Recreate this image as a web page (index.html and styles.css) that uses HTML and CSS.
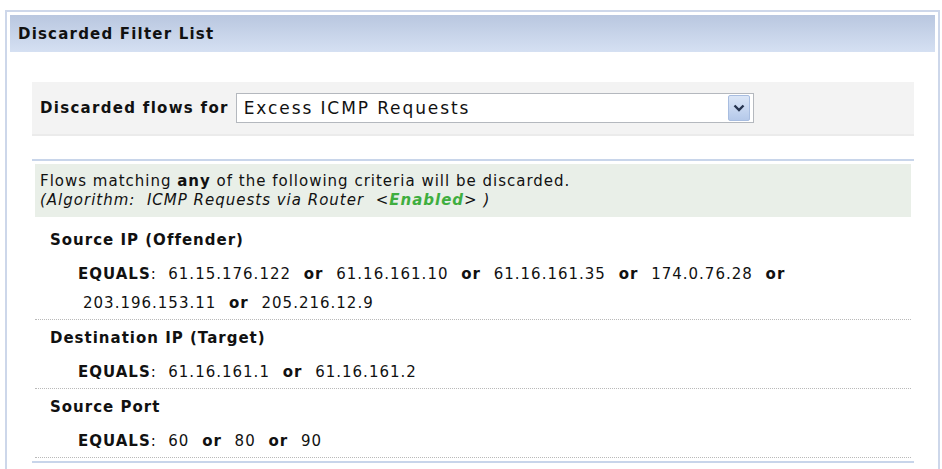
FILE: index.html
```html
<!DOCTYPE html>
<html lang="en">
<head>
    <meta charset="UTF-8">
    <title>Discarded Filter List</title>
    <link rel="stylesheet" href="styles.css">
</head>
<body>
    <div class="panel">
        <div class="panel-header">Discarded Filter List</div>

        <div class="panel-body">
            <!-- Seletor de algoritmo -->
            <div class="filter-bar">
                <label class="filter-label">Discarded flows for</label>
                <div class="select">
                    <span class="select-text">Excess ICMP Requests</span>
                    <span class="select-btn">
                        <svg width="12" height="8" viewBox="0 0 12 8">
                            <path d="M1.5 1.5 L6 6 L10.5 1.5" fill="none" stroke="#26344f" stroke-width="2.4"/>
                        </svg>
                    </span>
                </div>
            </div>

            <!-- Criterios -->
            <div class="criteria">
                <div class="note">
                    Flows matching <b>any</b> of the following criteria will be discarded.<br>
                    <i>(Algorithm:&nbsp; ICMP Requests via Router &nbsp;&lt;<b class="enabled">Enabled</b>&gt; )</i>
                </div>

                <div class="crit">
                    <div class="crit-title">Source IP (Offender)</div>
                    <div class="crit-values">
                        <b>EQUALS</b>:&nbsp; 61.15.176.122 <b class="op">or</b> 61.16.161.10 <b class="op">or</b> 61.16.161.35 <b class="op">or</b> 174.0.76.28 <b class="op">or</b><br>
                        203.196.153.11 <b class="op">or</b> 205.216.12.9
                    </div>
                </div>

                <div class="crit">
                    <div class="crit-title">Destination IP (Target)</div>
                    <div class="crit-values">
                        <b>EQUALS</b>:&nbsp; 61.16.161.1 <b class="op">or</b> 61.16.161.2
                    </div>
                </div>

                <div class="crit">
                    <div class="crit-title">Source Port</div>
                    <div class="crit-values">
                        <b>EQUALS</b>:&nbsp; 60 <b class="op">or</b> 80 <b class="op">or</b> 90
                    </div>
                </div>
            </div>
        </div>
    </div>
</body>
</html>
```

FILE: styles.css
```css
body {
    font-family: "DejaVu Sans", Verdana, sans-serif;
    font-size: 15px;
    letter-spacing: 1px;
    color: #111;
    background: #fff;
    margin: 0;
    padding: 0;
}
.panel {
    margin: 10px 0 0 5px;
    width: 925px;
    height: 460px;
    border: 2px solid #cdd7ea;
    border-bottom: none;
    padding: 3px;
}
.panel-header {
    height: 37px;
    line-height: 38px;
    padding-left: 8px;
    font-weight: bold;
    letter-spacing: 1.2px;
    background: linear-gradient(#b9c7e0, #d5e0f2);
}
.panel-body {
    padding: 30px 21px 0 22px;
}
.filter-bar {
    display: flex;
    align-items: center;
    height: 52px;
    padding-left: 8px;
    background: #f3f3f3;
    border-bottom: 2px solid #ebebeb;
}
.filter-label {
    font-weight: bold;
    letter-spacing: 1.3px;
    margin-right: 7px;
}
.select {
    display: flex;
    align-items: center;
    justify-content: space-between;
    width: 516px;
    height: 28px;
    border: 1px solid #b4b8be;
    background: #fff;
}
.select-text {
    font-size: 17px;
    letter-spacing: 1.9px;
    padding-left: 7px;
}
.select-btn {
    display: flex;
    align-items: center;
    justify-content: center;
    width: 20px;
    height: 24px;
    margin-right: 3px;
    border: 1px solid #a8bde0;
    border-radius: 2px;
    background: linear-gradient(#dbe6f7, #b5c9ea);
}
.criteria {
    margin-top: 23px;
    padding: 3px;
    border-top: 2px solid #c8d5ea;
    border-bottom: 2px solid #c8d5ea;
}
.note {
    background: #e9efe8;
    padding: 8px 5px 7px 5px;
    line-height: 19px;
    margin-bottom: 5px;
}
.enabled {
    color: #3fae3f;
}
.crit {
    border-bottom: 1px dotted #b9b9b9;
}
.crit-title {
    height: 34px;
    line-height: 36px;
    padding-left: 15px;
    font-weight: bold;
}
.crit-values {
    padding: 4px 0 1px 48px;
    text-indent: -5px;
    line-height: 29px;
}
.op {
    margin: 0 7px;
}
```
